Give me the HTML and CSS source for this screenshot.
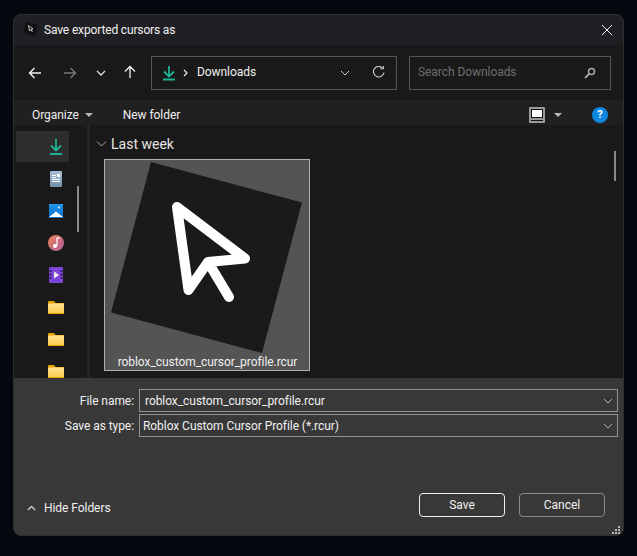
FILE: index.html
```html
<!DOCTYPE html>
<html lang="en">
<head>
  <meta charset="UTF-8" />
  <title>Save exported cursors as</title>
  <link rel="stylesheet" href="styles.css">
</head>
<body>

<div class="dialog">
  <div class="titlebar">
    <svg class="app-icon" width="16" height="16" viewBox="0 0 16 16">
      <path d="M3 1 15 4 12 15 0 12z" fill="#101012"/>
      <path d="M5.500 4.500 6.500 10 8 8.500 10 8zM8 8.500 9.500 11" fill="none" stroke="#eee" stroke-width=".8"/>
    </svg>
    <span class="title">Save exported cursors as</span>
    <svg class="close" width="12" height="12" viewBox="0 0 12 12">
      <path d="M1 1 11 11M11 1 1 11" stroke="#f0f0f0" stroke-width="1"/>
    </svg>
  </div>

  <div class="nav">
    <div class="nav-buttons">
      <svg width="14" height="14" viewBox="0 0 14 14"><path d="M13 7H1.500M6.500 2 1.500 7l5 5" fill="none" stroke="#f2f2f2" stroke-width="1.400"/></svg>
      <svg class="nav-forward" width="14" height="14" viewBox="0 0 14 14"><path d="M1 7h11.500M7.500 2l5 5-5 5" fill="none" stroke="#777" stroke-width="1.400"/></svg>
      <svg class="nav-recent" width="10" height="6" viewBox="0 0 10 6"><path d="M1 1l4 4 4-4" fill="none" stroke="#ddd" stroke-width="1.300"/></svg>
      <svg class="nav-up" width="14" height="14" viewBox="0 0 14 14"><path d="M7 13V1.500M2 6.500l5-5 5 5" fill="none" stroke="#f2f2f2" stroke-width="1.300"/></svg>
    </div>
    <div class="address">
      <svg width="14" height="16" viewBox="0 0 14 16"><path d="M7 1v10M2 6.500l5 5 5-5" fill="none" stroke="#1fb392" stroke-width="1.800"/><path d="M1 14.500h12" stroke="#1fb392" stroke-width="1.800"/></svg>
      <svg class="crumb-arrow" width="5" height="8" viewBox="0 0 5 8"><path d="M1 1l3 3-3 3" fill="none" stroke="#eee" stroke-width="1.200"/></svg>
      <span class="crumb">Downloads</span>
      <svg class="address-drop" width="10" height="6" viewBox="0 0 10 6"><path d="M1 1l4 4 4-4" fill="none" stroke="#ccc" stroke-width="1"/></svg>
      <svg class="refresh" width="13" height="13" viewBox="0 0 13 13"><path d="M11 2.500A5.300 5.300 0 1 0 12 6.500" fill="none" stroke="#c8c8c8" stroke-width="1.200"/><path d="M8 2.800h3.500V0" fill="none" stroke="#c8c8c8" stroke-width="1"/></svg>
    </div>
    <div class="search">
      <span class="search-text">Search Downloads</span>
      <svg width="12" height="12" viewBox="0 0 12 12"><circle cx="7.500" cy="4.500" r="3" fill="none" stroke="#a8a8a8" stroke-width="1.500"/><path d="M5.500 6.500 1 11" stroke="#a8a8a8" stroke-width="1.800"/></svg>
    </div>
  </div>

  <div class="toolbar">
    <span class="tool">Organize</span>
    <span class="caret"></span>
    <span class="tool new-folder">New folder</span>
    <svg class="view-icon" width="16" height="16" viewBox="0 0 16 16">
      <rect width="16" height="16" rx="1" fill="#9a9a9a"/>
      <rect x="2.500" y="2.500" width="11" height="8" fill="#fff" stroke="#111" stroke-width="1"/>
      <path d="M2 13.500h12" stroke="#111" stroke-width="1"/>
    </svg>
    <span class="caret view-caret"></span>
    <span class="help">?</span>
  </div>

  <div class="main">
    <div class="sidebar">
      <div class="side-row selected">
        <svg width="14" height="16" viewBox="0 0 14 16"><path d="M7 0v11M2 6.500l5 5 5-5" fill="none" stroke="#1fb392" stroke-width="1.800"/><path d="M1 15h12" stroke="#1fb392" stroke-width="2"/></svg>
      </div>
      <div class="side-row">
        <svg width="12" height="16" viewBox="0 0 12 16"><rect width="12" height="16" rx="1" fill="url(#docFill)"/><path d="M2 4.500h4M2 6.500h4M2 8.500h8M2 10.500h8" stroke="#fff" stroke-width="1"/><rect x="7" y="3" width="3" height="3" fill="#fff"/></svg>
      </div>
      <div class="side-row">
        <svg width="14" height="14" viewBox="0 0 14 14"><rect width="14" height="14" fill="url(#picFill)"/><path d="M0 13 7 7.500l7 5.500z" fill="#fff"/><circle cx="10" cy="3.500" r="1" fill="#fff"/></svg>
      </div>
      <div class="side-row">
        <svg width="16" height="16" viewBox="0 0 16 16"><circle cx="8" cy="8" r="8" fill="url(#musicFill)"/><path d="M9 3v8" stroke="#fff" stroke-width="1.200"/><path d="M9 3h2.500" stroke="#fff" stroke-width="1.500"/><circle cx="7" cy="11" r="2" fill="#fff"/></svg>
      </div>
      <div class="side-row">
        <svg width="14" height="16" viewBox="0 0 14 16"><rect width="14" height="16" rx="1" fill="#7d44d6"/><path d="M5 4.500v7l5-3.500z" fill="#f0f0f0"/><path d="M1.500 3v10M12.500 3v10" stroke="#33205c" stroke-width="2" stroke-dasharray="2 1.500"/></svg>
      </div>
      <div class="side-row"><svg class="folder" width="16" height="13" viewBox="0 0 16 13"><use href="#folder"/></svg></div>
      <div class="side-row"><svg class="folder" width="16" height="13" viewBox="0 0 16 13"><use href="#folder"/></svg></div>
      <div class="side-row"><svg class="folder" width="16" height="13" viewBox="0 0 16 13"><use href="#folder"/></svg></div>
      <span class="side-scroll"></span>
    </div>
    <div class="splitter"></div>
    <div class="files">
      <div class="group-head">
        <svg width="11" height="6" viewBox="0 0 11 6"><path d="M1 .5l4.500 4.500L10 .5" fill="none" stroke="#a8a8a8" stroke-width="1"/></svg>
        <span>Last week</span>
      </div>
      <div class="tile">
        <svg class="thumb" width="204" height="193" viewBox="0 0 204 193">
          <path d="M46 2 197 42.500 157 193 6 152.500z" fill="#1a1a1a"/>
          <path d="M72 47 83.500 130 103 102 140 98.500zM103 102 124 137" fill="none" stroke="#fff" stroke-width="10" stroke-linecap="round" stroke-linejoin="round"/>
        </svg>
        <div class="tile-name">roblox_custom_cursor_profile.rcur</div>
      </div>
      <span class="files-scroll"></span>
    </div>
  </div>

  <div class="bottom">
    <div class="field-row">
      <label>File name:</label>
      <div class="field name-field">roblox_custom_cursor_profile.rcur
        <svg width="10" height="6" viewBox="0 0 10 6"><path d="M1 1l4 4 4-4" fill="none" stroke="#b0b0b0" stroke-width="1"/></svg>
      </div>
    </div>
    <div class="field-row">
      <label>Save as type:</label>
      <div class="field">Roblox Custom Cursor Profile (*.rcur)
        <svg width="10" height="6" viewBox="0 0 10 6"><path d="M1 1l4 4 4-4" fill="none" stroke="#b0b0b0" stroke-width="1"/></svg>
      </div>
    </div>
    <div class="actions">
      <div class="hide-folders">
        <svg width="9" height="6" viewBox="0 0 9 6"><path d="M.8 5 4.500 1.500 8.200 5" fill="none" stroke="#c0c0c0" stroke-width="1.600"/></svg>
        <span>Hide Folders</span>
      </div>
      <button class="btn primary">Save</button>
      <button class="btn">Cancel</button>
    </div>
    <svg class="grip" width="8" height="8" viewBox="0 0 8 8" fill="#b5b5b5">
      <rect x="6" y="0" width="2" height="2"/><rect x="3" y="3" width="2" height="2"/><rect x="6" y="3" width="2" height="2"/>
      <rect x="0" y="6" width="2" height="2"/><rect x="3" y="6" width="2" height="2"/><rect x="6" y="6" width="2" height="2"/>
    </svg>
  </div>
</div>

<svg width="0" height="0" class="defs">
  <defs>
    <linearGradient id="folderFill" x1="0" y1="0" x2="0" y2="1">
      <stop offset="0" stop-color="#ffe58f"/>
      <stop offset="1" stop-color="#fcc94e"/>
    </linearGradient>
    <linearGradient id="docFill" x1="0" y1="0" x2="0" y2="1">
      <stop offset="0" stop-color="#a6bcd4"/>
      <stop offset="1" stop-color="#7390ae"/>
    </linearGradient>
    <linearGradient id="picFill" x1="0" y1="0" x2="0" y2="1">
      <stop offset="0" stop-color="#1e96ea"/>
      <stop offset="1" stop-color="#0b6ec9"/>
    </linearGradient>
    <linearGradient id="musicFill" x1="0" y1="0" x2="1" y2="1">
      <stop offset="0" stop-color="#ec8455"/>
      <stop offset="1" stop-color="#ae5c9e"/>
    </linearGradient>
    <g id="folder">
      <path d="M0 1a1 1 0 0 1 1-1h5l1.500 2H16v3H0z" fill="#e8a200"/>
      <rect y="2.500" width="16" height="10.500" rx="1" fill="url(#folderFill)"/>
      <path d="M0 12.500h16" stroke="#e8a200" stroke-width="1"/>
    </g>
  </defs>
</svg>

</body>
</html>
```

FILE: styles.css
```css
* {
  box-sizing: border-box;
}
body {
  margin: 0;
  height: 556px;
  padding: 14px 13px 20px 13px;
  background: #05090f;
  font-family: Roboto, "Noto Sans", sans-serif;
  font-size: 12px;
  letter-spacing: -0.06px;
  color: #f0f0f0;
  overflow: hidden;
}
.defs {
  position: absolute;
}
.dialog {
  width: 611px;
  height: 522px;
  display: flex;
  flex-direction: column;
  border: 1px solid #2e2e30;
  border-radius: 8px;
  overflow: hidden;
  background: #383838;
}

.titlebar {
  height: 30px;
  flex: none;
  display: flex;
  align-items: center;
  padding: 0 10px 0 9px;
  background: #202024;
}
.app-icon {
  margin-top: -2px;
}
.title {
  margin-left: 5px;
  margin-top: -1px;
  letter-spacing: -0.15px;
}
.close {
  margin-left: auto;
}

.nav {
  height: 55px;
  flex: none;
  display: flex;
  align-items: center;
  background: #191919;
  padding-left: 14px;
}
.nav-buttons {
  width: 123px;
  display: flex;
  align-items: center;
}
.nav-forward {
  margin-left: 21px;
}
.nav-recent {
  margin-left: 19px;
}
.nav-up {
  margin-left: 17px;
  margin-top: -2px;
}
.address {
  width: 246px;
  height: 34px;
  display: flex;
  align-items: center;
  padding: 0 11px 0 10px;
  border: 1px solid #555;
}
.crumb-arrow {
  margin-left: 7px;
}
.crumb {
  margin-left: 9px;
  margin-top: -2px;
}
.address-drop {
  margin-left: auto;
  margin-right: 22px;
}
.search {
  width: 202px;
  height: 34px;
  margin-left: 12px;
  display: flex;
  align-items: center;
  justify-content: space-between;
  padding: 0 14px 0 8px;
  border: 1px solid #555;
  color: #6e6e6e;
}
.search-text {
  margin-top: -2px;
}

.toolbar {
  height: 25px;
  flex: none;
  display: flex;
  align-items: center;
  background: #202020;
  padding: 4px 0 0 18px;
}
.caret {
  width: 0;
  height: 0;
  margin-left: 6px;
  border-left: 4px solid transparent;
  border-right: 4px solid transparent;
  border-top: 4px solid #b8b8b8;
}
.new-folder {
  margin-left: 30px;
}
.view-icon {
  margin-left: auto;
}
.view-caret {
  margin-left: 9px;
}
.help {
  width: 16px;
  height: 16px;
  margin-left: 30px;
  margin-right: 15px;
  border-radius: 50%;
  background: #0f86e0;
  color: #fff;
  font-size: 11px;
  font-weight: bold;
  line-height: 16px;
  text-align: center;
}

.main {
  height: 253px;
  flex: none;
  display: flex;
  background: #191919;
}
.sidebar {
  position: relative;
  width: 73px;
  flex: none;
  padding: 6px 0 0 2px;
  overflow: hidden;
}
.side-row {
  width: 53px;
  height: 32px;
  display: flex;
  align-items: center;
  justify-content: center;
  padding: 0 5px 0 32px;
}
.side-row svg {
  display: block;
  flex: none;
}
.side-row .folder {
  margin-top: 1px;
}
.selected {
  height: 31px;
  margin-bottom: 1px;
  background: #2d2d2d;
}
.side-scroll {
  position: absolute;
  left: 63px;
  top: 61px;
  width: 2px;
  height: 46px;
  background: #8a8a8a;
}
.splitter {
  width: 3px;
  flex: none;
  background: #252525;
}
.files {
  position: relative;
  flex: 1;
  padding-left: 14px;
  overflow: hidden;
}
.group-head {
  display: flex;
  align-items: center;
  height: 34px;
  margin-left: -8px;
  padding-top: 3px;
  font-size: 14px;
  letter-spacing: 0;
  color: #e4e4e4;
}
.group-head span {
  margin-left: 4px;
}
.tile {
  width: 206px;
  height: 212px;
  border: 1px solid #b0b0b0;
  background: #545454;
}
.thumb {
  display: block;
}
.tile-name {
  padding: 1px 0 0 1px;
  text-align: center;
  font-size: 12px;
  line-height: 16px;
}
.files-scroll {
  position: absolute;
  right: 7px;
  top: 26px;
  width: 2px;
  height: 30px;
  background: #8a8a8a;
}

.bottom {
  position: relative;
  flex: 1;
  padding: 11px 5px 0 0;
  background: #383838;
}
.field-row {
  display: flex;
  align-items: center;
  height: 23px;
  margin-bottom: 2px;
}
.field-row label {
  width: 120px;
  text-align: right;
  flex: none;
}
.field {
  flex: 1;
  height: 23px;
  margin-left: 5px;
  display: flex;
  align-items: center;
  justify-content: space-between;
  padding: 0 4px 0 3px;
  border: 1px solid #929292;
}
.name-field {
  padding-left: 5px;
}
.actions {
  display: flex;
  align-items: center;
  margin-top: 56px;
  padding-left: 13px;
  padding-right: 13px;
}
.hide-folders {
  display: flex;
  align-items: center;
  gap: 8px;
  margin-top: 6px;
  margin-right: auto;
}
.btn {
  width: 86px;
  height: 24px;
  margin-left: 14px;
  border: 1px solid #8a8a8a;
  border-radius: 4px;
  background: #383838;
  color: #f0f0f0;
  font-family: inherit;
  font-size: 12px;
  padding: 0;
}
.primary {
  border-color: #f0f0f0;
}
.grip {
  position: absolute;
  right: 3px;
  bottom: 1px;
}
```
